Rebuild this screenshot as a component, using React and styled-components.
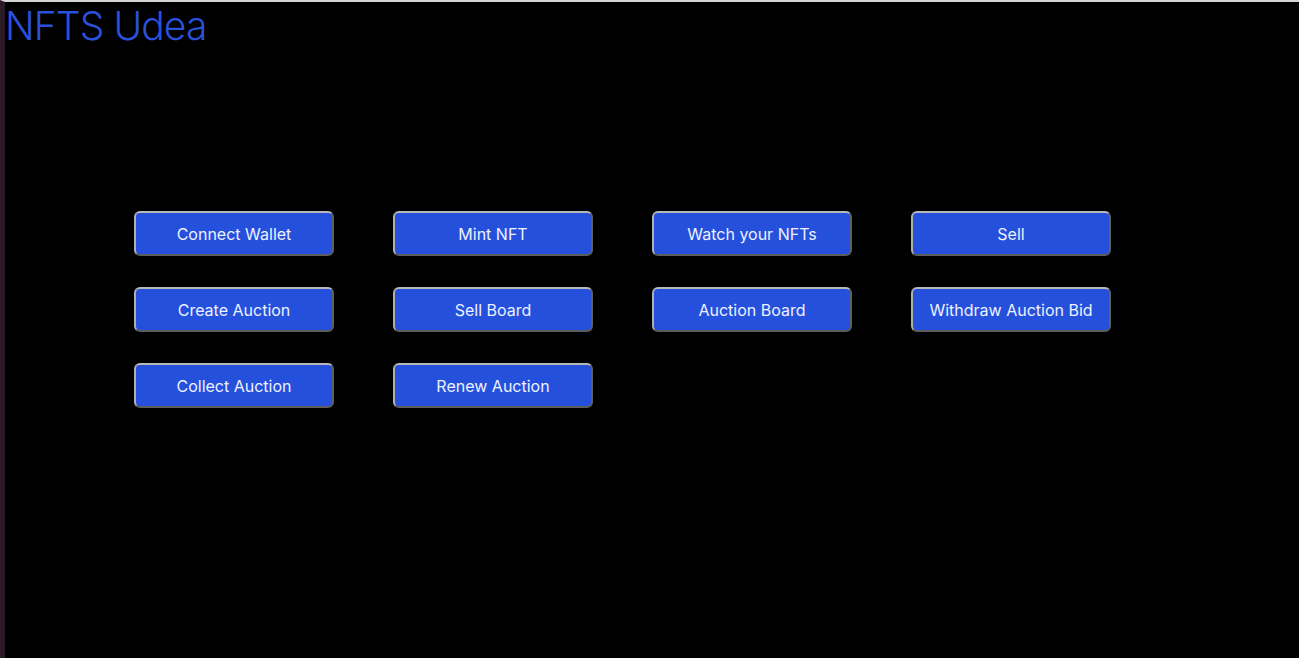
import React from 'react';
import styled, { createGlobalStyle } from 'styled-components';

const GlobalStyle = createGlobalStyle`
  html, body {
    margin: 0;
    padding: 0;
    background: #000;
  }
  #root {
    min-height: 100vh;
  }
`;

const Page = styled.div`
  box-sizing: border-box;
  min-height: 100vh;
  background: #000;
  border-top: 2px solid #d4d4d4;
  border-left: 5px solid #2b1b26;
  font-family: Inter, "Open Sans", sans-serif;
`;

const Title = styled.h1`
  margin: 0;
  padding-left: 0;
  font-size: 39px;
  font-weight: 300;
  line-height: 48px;
  color: #2a51dc;
  letter-spacing: -0.9px;
`;

const Grid = styled.div`
  display: grid;
  grid-template-columns: repeat(4, 200px);
  column-gap: 59px;
  row-gap: 31px;
  padding: 161px 0 0 129px;
`;

const ActionButton = styled.button`
  box-sizing: border-box;
  width: 100%;
  height: 45px;
  background: #2450dc;
  color: #eef1ff;
  border: 2px solid #9a9a9a;
  border-top-color: #b8b8b8;
  border-left-color: #b0b0b0;
  border-right-color: #606060;
  border-bottom-color: #5c5c5c;
  border-radius: 6px;
  font-family: Inter, "Open Sans", sans-serif;
  font-size: 16px;
  font-weight: 400;
  cursor: pointer;
`;

const actions = [
  'Connect Wallet',
  'Mint NFT',
  'Watch your NFTs',
  'Sell',
  'Create Auction',
  'Sell Board',
  'Auction Board',
  'Withdraw Auction Bid',
  'Collect Auction',
  'Renew Auction',
];

export default function App() {
  return (
    <>
      <GlobalStyle />
      <Page>
        <Title>NFTS Udea</Title>
        <Grid>
          {actions.map((label) => (
            <ActionButton key={label}>{label}</ActionButton>
          ))}
        </Grid>
      </Page>
    </>
  );
}
